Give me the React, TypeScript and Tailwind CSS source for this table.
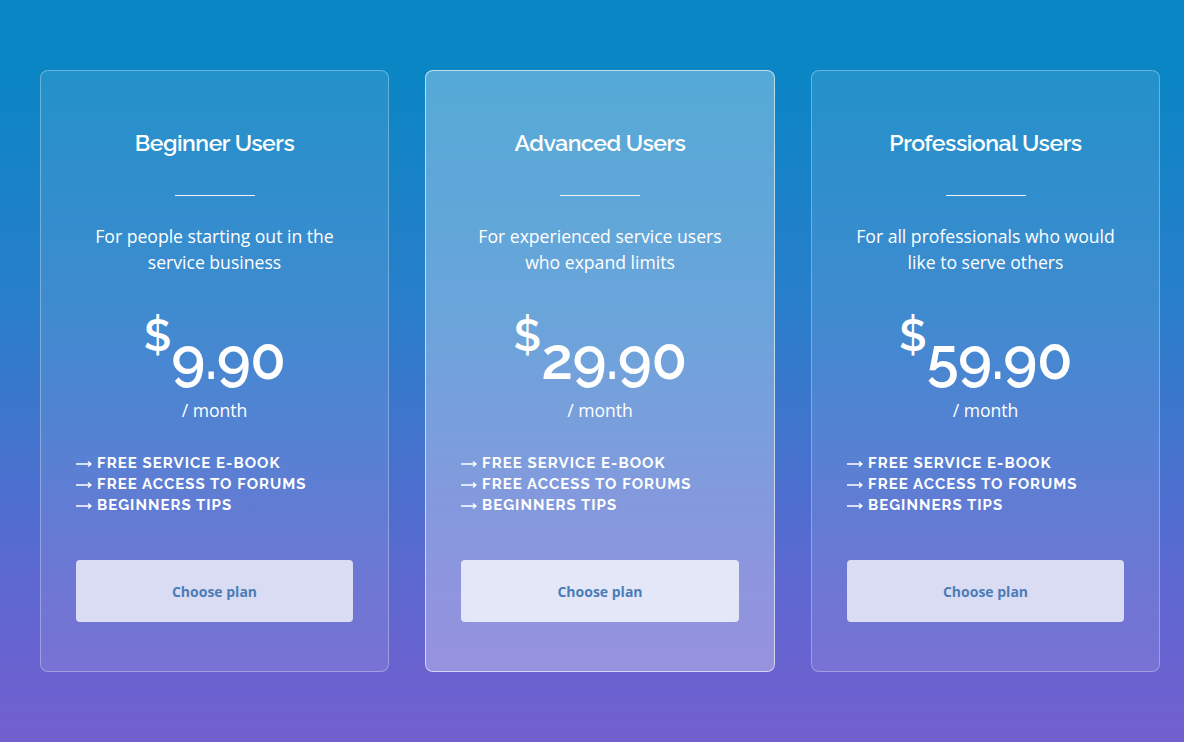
const plans = [
  {
    name: 'Beginner Users',
    desc: ['For people starting out in the', 'service business'],
    price: '9.90',
    featured: false,
  },
  {
    name: 'Advanced Users',
    desc: ['For experienced service users', 'who expand limits'],
    price: '29.90',
    featured: true,
  },
  {
    name: 'Professional Users',
    desc: ['For all professionals who would', 'like to serve others'],
    price: '59.90',
    featured: false,
  },
];

const features = ['Free service e-book', 'Free access to forums', 'Beginners tips'];

const heading = { fontFamily: 'Raleway, Montserrat, Inter, "Noto Sans", sans-serif' };

function Arrow() {
  return (
    <svg width="16" height="8" viewBox="0 0 16 8" className="mr-[5px] shrink-0" fill="none" stroke="currentColor" strokeWidth="1.4">
      <path d="M0 4h15M12 1.5l3 2.5-3 2.5" />
    </svg>
  );
}

function PlanCard({ plan }: { plan: (typeof plans)[number] }) {
  return (
    <div
      className={`flex flex-col items-center rounded-lg border px-[35px] pt-[57px] pb-[49px] text-white ${
        plan.featured ? 'w-[350px] border-white/60 bg-white/30' : 'w-[349px] border-white/30 bg-white/10'
      }`}
    >
      <h2 className="text-[23px] leading-[30px] font-semibold tracking-[-0.02em]" style={heading}>
        {plan.name}
      </h2>
      <div className="mt-[37px] h-px w-20 bg-white/90" />
      <p className="mt-[27px] text-center text-[17.6px] leading-[26px] font-['Open_Sans',sans-serif]">
        {plan.desc[0]}
        <br />
        {plan.desc[1]}
      </p>
      <div className="mt-[39px] flex items-start justify-center font-semibold" style={heading}>
        <span className="text-[44px] leading-none">$</span>
        <span className="mt-[16px] text-[58px] leading-none tracking-[-0.01em]">{plan.price}</span>
      </div>
      <div className="mt-[9px] text-[17.6px] leading-[26px] font-['Open_Sans',sans-serif]">/ month</div>
      <ul className="mt-[30px] w-full text-[15px] leading-[21px] font-bold uppercase tracking-[0.07em]" style={heading}>
        {features.map((f) => (
          <li key={f} className="flex items-center">
            <Arrow />
            {f}
          </li>
        ))}
      </ul>
      <button
        className={`mt-[44px] h-[62px] w-full rounded-[4px] text-[14px] font-bold text-[#4b7cb8] font-['Open_Sans',sans-serif] ${
          plan.featured ? 'bg-[#e4e7f8]' : 'bg-[#dadcf3]'
        }`}
      >
        Choose plan
      </button>
    </div>
  );
}

export default function App() {
  return (
    <div className="min-h-[742px] bg-[linear-gradient(180deg,#0986c4_8%,#2a7ecb_42%,#5d68d0_78%,#735fd0_100%)] pt-[70px] pl-[40px]">
      <div className="flex gap-[36px]">
        {plans.map((p) => (
          <PlanCard key={p.name} plan={p} />
        ))}
      </div>
    </div>
  );
}
